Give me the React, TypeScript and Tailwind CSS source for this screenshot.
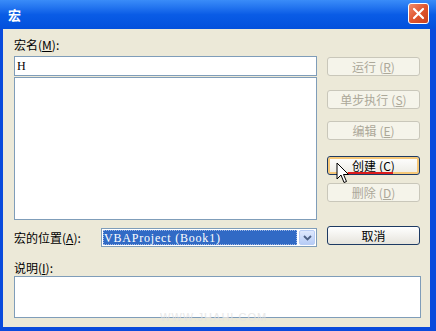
import React from "react";

const cjk = { fontFamily: '"Noto Sans CJK SC", "Liberation Sans", sans-serif' };
const serif = { fontFamily: '"Liberation Serif", "DejaVu Serif", serif' };

function Mn({ c }: { c: string }) {
  return (
    <span>
      (<span className="underline underline-offset-1">{c}</span>)
    </span>
  );
}

function Btn({
  label,
  m,
  disabled,
  hot,
  className = "",
}: {
  label: string;
  m?: string;
  disabled?: boolean;
  hot?: boolean;
  className?: string;
}) {
  const base =
    "w-[93px] h-[19px] rounded-[3px] flex items-center justify-center text-[12px] leading-[14px] border";
  const look = disabled
    ? "border-[#C9C7BA] bg-[#F5F4EA] text-[#ACA899]"
    : hot
    ? "border-[#1d3a63] bg-gradient-to-b from-[#ffffff] to-[#ecebe4] text-black shadow-[inset_0_0_0_2px_#f6c878]"
    : "border-[#1d3a63] bg-gradient-to-b from-[#ffffff] to-[#e6e4dc] text-black";
  return (
    <div className={`${base} ${look} ${className}`} style={cjk}>
      <span>{label}</span>
      {m && (
        <span className="ml-[3px]">
          <Mn c={m} />
        </span>
      )}
    </div>
  );
}

export default function App() {
  return (
    <div className="w-[436px] h-[331px] flex flex-col bg-[#0a4bdc] overflow-hidden relative">
      {/* Title bar */}
      <div className="h-[29px] flex items-start justify-between bg-gradient-to-b from-[#3a8cf8] via-[#0a5ce6] to-[#0350dc] pl-[8px] pr-[7px]">
        <span
          className="text-white text-[13px] font-bold leading-[14px] mt-[8px]"
          style={cjk}
        >
          宏
        </span>
        <div className="mt-[3px] w-[21px] h-[21px] rounded-[3px] border border-white bg-gradient-to-br from-[#f08a6a] via-[#e0552e] to-[#c9401d] flex items-center justify-center">
          <svg width="13" height="13" viewBox="0 0 13 13">
            <path d="M2 2 L11 11 M11 2 L2 11" stroke="white" strokeWidth="2.2" strokeLinecap="round" />
          </svg>
        </div>
      </div>

      {/* Body */}
      <div className="flex-1 ml-[3px] mr-[6px] mb-[4px] bg-[#ECE9D8] pt-[9px] pl-[11px] pr-[10px] flex flex-col">
        <div className="flex gap-[10px]">
          <div className="w-[303px] flex flex-col">
            <div className="h-[18px] text-[12px] leading-[14px] text-black" style={cjk}>
              宏名<Mn c="M" />:
            </div>
            <div className="h-[20px] bg-white border border-[#7F9DB9] flex items-center pl-[2px]">
              <span className="text-[12px] leading-[14px] text-black" style={serif}>
                H
              </span>
            </div>
            <div className="mt-[1px] h-[143px] bg-white border border-[#7F9DB9]" />
          </div>
          <div className="w-[93px] flex flex-col pt-[19px]">
            <Btn label="运行" m="R" disabled />
            <Btn label="单步执行" m="S" disabled className="mt-[14px]" />
            <Btn label="编辑" m="E" disabled className="mt-[12px]" />
            <Btn label="创建" m="C" hot className="mt-[16px]" />
            <Btn label="删除" m="D" disabled className="mt-[8px]" />
          </div>
        </div>

        {/* Location row */}
        <div className="mt-[8px] flex items-start h-[19px]">
          <div className="w-[87px] h-[19px] flex items-center text-[12px] leading-[14px] text-black" style={cjk}>
            宏的位置<Mn c="A" />:
          </div>
          <div className="w-[216px] h-[19px] bg-white border border-[#7F9DB9] flex items-stretch p-[1px]">
            <div className="flex-1 bg-[#316AC5] outline-1 outline-dotted outline-[#9fb8e6] -outline-offset-1 flex items-center pl-[1px]">
              <span className="text-white text-[12px] leading-[12px] whitespace-pre tracking-[0.8px]" style={serif}>
                VBAProject (Book1)
              </span>
            </div>
            <div className="ml-[2px] w-[16px] rounded-[2px] bg-gradient-to-b from-[#dfe9fd] to-[#b7ccf6] border border-[#b9cdf5] flex items-center justify-center">
              <svg width="9" height="6" viewBox="0 0 9 6">
                <path d="M1 1 L4.5 4.5 L8 1" fill="none" stroke="#4d6185" strokeWidth="1.8" />
              </svg>
            </div>
          </div>
          <Btn label="取消" className="ml-[10px] -mt-[2px]" />
        </div>

        {/* Description */}
        <div className="mt-[14px] h-[15px] text-[12px] leading-[14px] text-black" style={cjk}>
          说明<Mn c="I" />:
        </div>
        <div className="w-[407px] h-[42px] bg-white border border-[#7F9DB9]" />
      </div>

      {/* Annotation: red underline */}
      <div className="absolute left-[348px] top-[172px] w-[45px] h-[2px] bg-[#dd1c1c]" />
      {/* Mouse cursor */}
      <svg className="absolute left-[336px] top-[162px]" width="13" height="22" viewBox="0 0 13 22">
        <path
          d="M1 1 V17 L5 13 L8 20.5 L10.5 19.5 L7.5 12.5 H12.5 Z"
          fill="white"
          stroke="black"
          strokeWidth="1"
          strokeLinejoin="miter"
        />
      </svg>
      {/* Watermark */}
      <div
        className="absolute left-[160px] top-[311px] text-[11px] leading-[12px] tracking-[1px] text-[#e4e4e4] opacity-80"
        style={{ fontFamily: '"Liberation Sans", sans-serif' }}
      >
        WWW.JHAHI.COM
      </div>
    </div>
  );
}
